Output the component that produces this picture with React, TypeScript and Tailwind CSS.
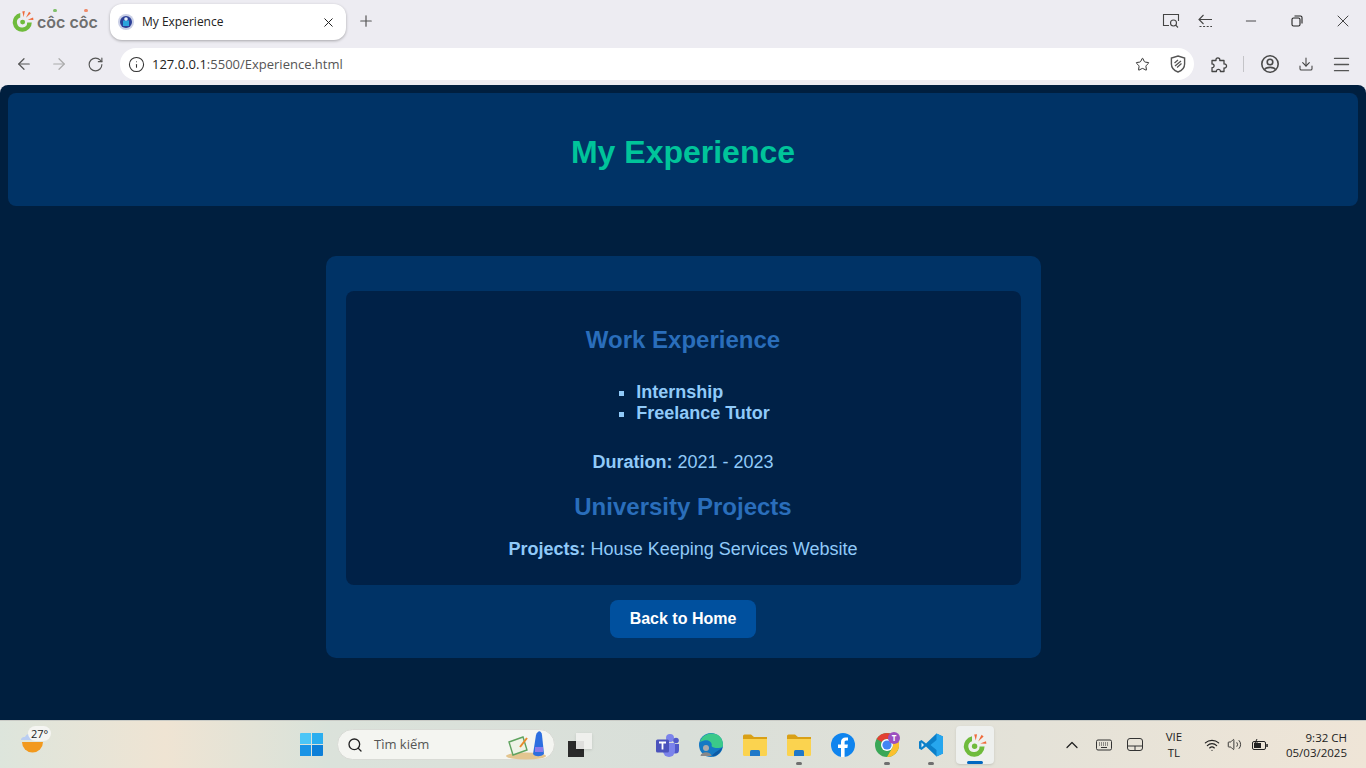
import { ArrowLeft, ArrowRight, ChevronUp, Download, Info, Menu, Minus, Plus, RotateCw, Search, Star, Volume2, Wifi, X } from 'lucide-react'

// Small drawings that the icon packages don't have
const CocCocMark = ({ size = 22 }: { size?: number }) => (
  <svg width={size} height={size} viewBox="0 0 24 24">
    <path d="M9 3.2A10.4 10.4 0 1 0 21.6 13.5H16.6A5.6 5.6 0 1 1 9 8.2Z" fill="#6fbb3c" />
    <circle cx="11.6" cy="13.2" r="2.7" fill="#6fbb3c" />
    <path d="M11.2 1.6L14 1.2L12.8 7.6Z" fill="#ef6a3a" />
    <path d="M18.6 1.8L20.6 3.6L15.2 8.4Z" fill="#ef6a3a" />
    <path d="M23 8.2L23.4 10.8L17.2 10.6Z" fill="#ef6a3a" />
  </svg>
)

const Favicon = () => (
  <svg width="16" height="16" viewBox="0 0 16 16">
    <circle cx="8" cy="8" r="8" fill="#c9cfe6" />
    <circle cx="8" cy="8" r="6" fill="#2b3f97" />
    <rect x="5" y="6.5" width="6" height="5.5" fill="#2aa3dc" />
    <circle cx="8" cy="5" r="1.8" fill="#e8f2fa" />
  </svg>
)

const LensTab = () => (
  <svg width="18" height="18" viewBox="0 0 18 18" fill="none" stroke="#444" strokeWidth="1.1">
    <path d="M7 13.5H1.5V2.5H16.5V9" />
    <circle cx="11.5" cy="11" r="3" />
    <path d="M13.7 13.2L16 15.5" />
  </svg>
)

const SplitBack = () => (
  <svg width="16" height="16" viewBox="0 0 16 16" fill="none" stroke="#444" strokeWidth="1.1">
    <path d="M15 6.5H2M6.5 2L2 6.5L6.5 11" />
    <path d="M2.5 13.5H15" strokeDasharray="2 1.6" />
  </svg>
)

const Restore = () => (
  <svg width="12" height="12" viewBox="0 0 12 12" fill="none" stroke="#222" strokeWidth="1.1">
    <rect x="1" y="3" width="8" height="8" rx="1.5" />
    <path d="M3.5 1H9.5A1.5 1.5 0 0 1 11 2.5V8.5" />
  </svg>
)

const Shield = () => (
  <svg width="16" height="18" viewBox="0 0 16 18" fill="none">
    <path d="M8 1L14.6 3V9C14.6 13 11.5 15.8 8 17C4.5 15.8 1.4 13 1.4 9V3Z" stroke="#555" strokeWidth="1.4" />
    <path d="M5 11L11 6M7 12.5L11.5 8.5M4.5 8L8 5" stroke="#555" strokeWidth="1.3" />
  </svg>
)

const Puzzle = () => (
  <svg width="18" height="18" viewBox="0 0 18 18" fill="none" stroke="#444" strokeWidth="1.3" strokeLinejoin="round">
    <path d="M2 5.5H6C5.4 2 10.4 2 9.8 5.5H14V9C17.4 8.4 17.4 13.6 14 13V16.5H10.4C10.8 13.6 6 13.6 6.4 16.5H2V12.6C4.8 13 4.8 8.6 2 9Z" />
  </svg>
)

const Profile = () => (
  <svg width="20" height="20" viewBox="0 0 20 20" fill="none" stroke="#4a4a4a" strokeWidth="1.6">
    <circle cx="10" cy="10" r="8.2" />
    <circle cx="10" cy="8" r="2.8" />
    <path d="M4.6 15.6C6 12.6 14 12.6 15.4 15.6" />
  </svg>
)

const Weather = () => (
  <svg width="26" height="30" viewBox="0 0 26 30">
    <path d="M1 12C1 9.5 3.5 9 5 9C6 6.5 8 5.5 10 6L14 12Z" fill="#b9cdf2" />
    <path d="M2 14H23A10.5 10.5 0 0 1 2 14Z" fill="#f2991d" />
  </svg>
)

const WinLogo = () => (
  <div className="grid grid-cols-2 gap-[1px] w-[23px] h-[23px]">
    <div className="bg-[#4cc6f7] rounded-tl-[1px]" />
    <div className="bg-[#2aaeef]" />
    <div className="bg-[#1a94e6]" />
    <div className="bg-[#0c7fd8] rounded-br-[1px]" />
  </div>
)

const SearchArt = () => (
  <svg width="44" height="30" viewBox="0 0 44 30">
    <ellipse cx="21" cy="26" rx="20" ry="3.5" fill="#e3c590" />
    <path d="M4 12L18 7L22 20L8 25Z" fill="#eef3e6" stroke="#5fa35f" strokeWidth="1.4" />
    <path d="M15 17L22 8" stroke="#e98a2c" strokeWidth="2" />
    <path d="M31 5C33 0 36 0 37 5L39 24C36 27 30 27 28 24Z" fill="#2c6ee0" />
    <rect x="30" y="17" width="8" height="5" fill="#8c7be8" />
  </svg>
)

const TaskView = () => (
  <div className="relative w-[24px] h-[24px]">
    <div className="absolute left-[0px] bottom-[0px] w-[16px] h-[16px] bg-[#2a2a2a]" />
    <div className="absolute right-[0px] top-[0px] w-[16px] h-[16px] bg-[#f2f2f0] opacity-90 shadow-sm" />
  </div>
)

const Teams = () => (
  <svg width="25" height="24" viewBox="0 0 25 24">
    <circle cx="15" cy="5" r="4" fill="#7b83eb" />
    <circle cx="21" cy="7.5" r="2.8" fill="#5059c9" />
    <path d="M17 11H24V17A3.5 3.5 0 0 1 17 17Z" fill="#5059c9" />
    <path d="M8 10H20V18A6 6 0 0 1 8 18Z" fill="#7b83eb" />
    <rect x="1" y="6.5" width="13" height="13" rx="1.5" fill="#4b53bc" />
    <path d="M4 9.5H11M7.5 9.5V16.5" stroke="#fff" strokeWidth="1.8" />
  </svg>
)

const Edge = () => (
  <svg width="24" height="24" viewBox="0 0 24 24">
    <circle cx="12" cy="12" r="12" fill="#1479c4" />
    <path d="M1 9C3 1 12 -1 18 1.5C23 4 25 10 23.5 14C21 15.5 14 15.5 12.5 13C14 9.5 9 6 5 7.5C3 8.2 2 8.5 1 9Z" fill="#3bc98a" />
    <path d="M13 23C18 24 22 19 23.5 14C21 17.5 15 19 13 23Z" fill="#0c59a4" />
    <circle cx="7" cy="15" r="3" fill="#aaa" />
    <path d="M1.5 23C2 18 12 18 12.5 23Z" fill="#888" />
  </svg>
)

const Folder = () => (
  <svg width="24" height="22" viewBox="0 0 24 22">
    <path d="M0 2A1.5 1.5 0 0 1 1.5 .5H8L11 3H24V8H0Z" fill="#d9a016" />
    <path d="M0 5H24V20.5A1.5 1.5 0 0 1 22.5 22H1.5A1.5 1.5 0 0 1 0 20.5Z" fill="#fbd34f" />
    <path d="M7 22V17.5A1.5 1.5 0 0 1 8.5 16H15.5A1.5 1.5 0 0 1 17 17.5V22Z" fill="#1f78c8" />
  </svg>
)

const Facebook = () => (
  <svg width="24" height="24" viewBox="0 0 24 24">
    <circle cx="12" cy="12" r="12" fill="#0f84ee" />
    <path d="M10 24V15H7V11.5H10V9C10 6 12 4.4 14.6 4.4C15.6 4.4 16.6 4.5 17 4.6V7.6H15.4C14 7.6 13.6 8.4 13.6 9.4V11.5H16.9L16.4 15H13.6V24Z" fill="#fff" />
  </svg>
)

const Chrome = () => (
  <div className="relative w-[24px] h-[24px]">
    <svg width="24" height="24" viewBox="0 0 24 24">
      <circle cx="12" cy="12" r="12" fill="#3aa757" />
      <path d="M12 0A12 12 0 0 1 22.4 6H12A6 6 0 0 0 6.8 9L1.6 6A12 12 0 0 1 12 0Z" fill="#e34133" />
      <path d="M22.4 6A12 12 0 0 1 12 24L17.2 15A6 6 0 0 0 17.2 9Z" fill="#fbc02d" />
      <circle cx="12" cy="12" r="6" fill="#fff" />
      <circle cx="12" cy="12" r="4.6" fill="#4285f4" />
    </svg>
    <div className="absolute right-[-1px] top-[-1px] w-[12px] h-[12px] rounded-full bg-[#9c4fc0] text-white text-[8px] leading-[12px] text-center font-bold">T</div>
  </div>
)

const VsCode = () => (
  <svg width="24" height="24" viewBox="0 0 24 24">
    <path d="M17.5 .5L24 3.5V20.5L17.5 23.5L7 13.5L2.5 17L0 15.5V8.5L2.5 7L7 10.5Z" fill="#0b7fc9" />
    <path d="M17.5 .5L24 3.5V20.5L17.5 23.5V17L11.5 12L17.5 7Z" fill="#26a6ee" />
    <path d="M2.5 9.5V14.5L5 12Z" fill="#e8f4fc" />
  </svg>
)

const KeyboardIcon = () => (
  <svg width="16" height="12" viewBox="0 0 16 12" fill="none" stroke="#333" strokeWidth="1">
    <rect x=".5" y="1" width="15" height="10" rx="1.5" />
    <path d="M3 4H13M3 6H13" strokeDasharray="1 1" />
    <path d="M5 8.5H11" />
  </svg>
)

const Touchpad = () => (
  <svg width="16" height="13" viewBox="0 0 16 13" fill="none" stroke="#333" strokeWidth="1">
    <rect x=".5" y=".5" width="15" height="12" rx="2.5" />
    <path d="M.5 8H15.5M8 8V12.5" />
  </svg>
)

const Battery = () => (
  <svg width="16" height="12" viewBox="0 0 16 12">
    <rect x=".5" y="2.5" width="13" height="8" rx="1.5" fill="none" stroke="#222" />
    <rect x="2" y="4" width="7" height="5" fill="#222" />
    <rect x="14.3" y="5" width="1.5" height="3" fill="#222" />
    <path d="M5 0L3 4H6L4 8" fill="none" stroke="#222" />
  </svg>
)

const TaskItem = ({ children, running, active }: { children: React.ReactNode; running?: boolean; active?: boolean }) => (
  <div className={`relative w-[38px] h-[38px] mx-[3px] flex items-center justify-center rounded-[4px] ${active ? 'bg-[#eef0ee] shadow-sm' : ''}`}>
    {children}
    {running && <div className="absolute bottom-[-1px] w-[6px] h-[3px] rounded-full bg-[#6f6f6f]" />}
    {active && <div className="absolute bottom-[0px] w-[16px] h-[3px] rounded-full bg-[#0067c0]" />}
  </div>
)

const BrowserChrome = () => (
  <div className="bg-[#edecf2] text-[#222] font-['Open_Sans',sans-serif]">
    <div className="h-[42px] flex items-center">
      <div className="w-[110px] pl-[12px] flex items-center gap-[3px] shrink-0">
        <CocCocMark />
        <span className="relative mt-[2px] font-['Inter',sans-serif] font-semibold text-[16px] text-[#6f6f6f]">
          côc côc
          <span className="absolute left-[16px] top-[-1px] w-[4px] h-[3px] rounded-full bg-[#7fc06a]" />
          <span className="absolute left-[47px] top-[-1px] w-[4px] h-[3px] rounded-full bg-[#ef8a6a]" />
        </span>
      </div>
      <div className="mt-[2px] w-[236px] h-[36px] bg-white rounded-[12px] shadow-[0_1px_3px_rgba(0,0,0,0.3)] flex items-center pl-[8px] pr-[10px]">
        <Favicon />
        <span className="ml-[8px] flex-1 text-[12px]">My Experience</span>
        <X size={15} strokeWidth={1.6} />
      </div>
      <Plus size={18} strokeWidth={1.6} className="ml-[11px] text-[#555]" />
      <div className="ml-auto flex items-center">
        <LensTab />
        <div className="ml-[17px]"><SplitBack /></div>
        <Minus size={16} strokeWidth={1.2} className="ml-[30px]" />
        <div className="ml-[32px]"><Restore /></div>
        <X size={20} strokeWidth={1} className="ml-[30px] mr-[13px]" />
      </div>
    </div>
    <div className="h-[43px] flex items-center pt-[1px]">
      <ArrowLeft size={18} strokeWidth={1.6} className="ml-[15px] text-[#555]" />
      <ArrowRight size={18} strokeWidth={1.6} className="ml-[17px] text-[#aaa]" />
      <RotateCw size={17} strokeWidth={1.6} className="ml-[19px] text-[#555]" />
      <div className="ml-[16px] w-[1074px] h-[32px] bg-white rounded-[16px] flex items-center pl-[8px] pr-[7px]">
        <Info size={17} strokeWidth={1.5} className="text-[#333]" />
        <span className="ml-[7px] mt-[1px] flex-1 text-[13px]">127.0.0.1<span className="text-[#555]">:5500/Experience.html</span></span>
        <Star size={15} strokeWidth={1.6} className="text-[#333]" />
        <div className="ml-[20px] mr-[1px]"><Shield /></div>
      </div>
      <div className="ml-[16px]"><Puzzle /></div>
      <div className="ml-[15px] w-[1px] h-[16px] bg-[#c4c4c8]" />
      <div className="ml-[16px]"><Profile /></div>
      <Download size={16} strokeWidth={1.6} className="ml-[18px] text-[#444]" />
      <Menu size={21} strokeWidth={1.5} className="ml-[17px] text-[#555]" />
    </div>
  </div>
)

const ExperiencePage = () => (
  <main className="flex-1 bg-[#001f3f] rounded-t-[8px] px-[8px] pt-[8px] font-['Liberation_Sans',Arial,sans-serif] text-center">
    <header className="h-[113px] bg-[#003366] rounded-[8px] flex items-center justify-center">
      <h1 className="text-[32px] font-bold text-[#00c49a] mt-[4px]">My Experience</h1>
    </header>
    <section className="mt-[50px] mx-auto w-[715px] h-[402px] bg-[#003366] rounded-[10px] pt-[35px] px-[20px]">
      <div className="h-[294px] bg-[#002147] rounded-[8px] pt-[35px] text-[18px] leading-[21px] text-[#90caf9]">
        <h2 className="text-[24px] leading-[27px] font-bold text-[#2a6ebb]">Work Experience</h2>
        <ul className="mt-[29px] inline-block list-[square] pl-[40px] text-left font-bold">
          <li>Internship</li>
          <li>Freelance Tutor</li>
        </ul>
        <p className="mt-[28px]"><strong>Duration:</strong> 2021 - 2023</p>
        <h2 className="mt-[20px] text-[24px] leading-[27px] font-bold text-[#2a6ebb]">University Projects</h2>
        <p className="mt-[19px]"><strong>Projects:</strong> House Keeping Services Website</p>
      </div>
      <a className="mt-[15px] inline-block w-[146px] h-[38px] leading-[38px] bg-[#00509e] rounded-[8px] text-white font-bold text-[16px]">Back to Home</a>
    </section>
  </main>
)

const Taskbar = () => (
  <footer className="h-[48px] shrink-0 border-t border-[#c9cbc6] bg-gradient-to-r from-[#dde5dc] via-[#d9dfd9] to-[#efe5d7] font-['Open_Sans',sans-serif] text-[#222] flex items-center relative">
    <div className="absolute inset-y-0 left-0 w-[330px] bg-gradient-to-r from-[#dde5dc] via-[#efe4d3] to-[#d8e2da]" />
    <div className="relative ml-[20px] w-[32px] h-[32px] mb-[5px]">
      <div className="absolute left-0 top-[2px]"><Weather /></div>
      <div className="absolute left-[8px] top-[0px] px-[3px] rounded-[8px] bg-[#f5f5f2] text-[11px] leading-[15px]">27°</div>
    </div>
    <div className="relative ml-[248px] flex items-center">
      <div className="w-[23px] flex justify-center"><WinLogo /></div>
      <div className="ml-[14px] w-[218px] h-[31px] rounded-full bg-[#f4f5f1] border border-[#d9dbd6] flex items-center pl-[9px]">
        <Search size={16} strokeWidth={2} className="text-[#222]" />
        <span className="ml-[11px] flex-1 text-[13px] text-[#555]">Tìm kiếm</span>
        <SearchArt />
        <span className="w-[5px]" />
      </div>
      <div className="ml-[13px]"><TaskView /></div>
      <div className="ml-[53px] flex items-center">
        <TaskItem><Teams /></TaskItem>
        <TaskItem><Edge /></TaskItem>
        <TaskItem><Folder /></TaskItem>
        <TaskItem running><Folder /></TaskItem>
        <TaskItem><Facebook /></TaskItem>
        <TaskItem running><Chrome /></TaskItem>
        <TaskItem running><VsCode /></TaskItem>
        <TaskItem active><CocCocMark size={24} /></TaskItem>
      </div>
    </div>
    <div className="relative ml-auto mr-[19px] flex items-center">
      <ChevronUp size={20} strokeWidth={1.5} />
      <div className="ml-[14px]"><KeyboardIcon /></div>
      <div className="ml-[15px]"><Touchpad /></div>
      <div className="ml-[15px] w-[32px] text-center text-[11.5px] leading-[16px]">VIE<br />TL</div>
      <Wifi size={16} strokeWidth={1.8} className="ml-[14px]" />
      <Volume2 size={15} strokeWidth={1.4} className="ml-[7px]" />
      <div className="ml-[10px]"><Battery /></div>
      <div className="ml-[18px] text-right text-[11.5px] leading-[15px]">9:32 CH<br />05/03/2025</div>
    </div>
  </footer>
)

export default function App() {
  return (
    <div className="h-screen flex flex-col bg-[#edecf2] overflow-hidden">
      <BrowserChrome />
      <ExperiencePage />
      <Taskbar />
    </div>
  )
}
